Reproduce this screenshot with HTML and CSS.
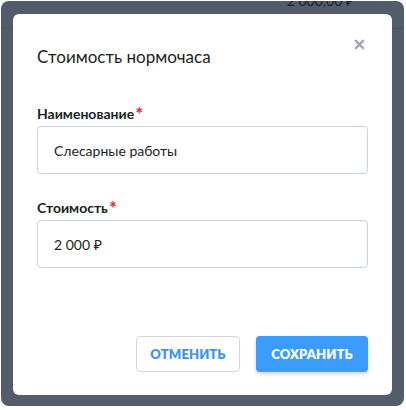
FILE: index.html
```html
<!DOCTYPE html>
<html lang="ru">
<head>
<meta charset="utf-8">
<title>Стоимость нормочаса</title>
<link rel="stylesheet" href="styles.css">
</head>
<body>
<div class="screen">
  <div class="bg-row"><span class="bg-sum">2 000,00 ₽</span></div>
  <div class="modal">
    <div class="modal-head">
      <h2 class="modal-title">Стоимость нормочаса</h2>
      <button class="close" aria-label="Закрыть">
        <svg width="11" height="11" viewBox="0 0 11 11"><path d="M1.2 1.2 L9.8 9.8 M9.8 1.2 L1.2 9.8" stroke="#a3a9b3" stroke-width="2.4" stroke-linecap="butt"/></svg>
      </button>
    </div>
    <div class="field field-first">
      <label class="label">Наименование<span class="req">*</span></label>
      <div class="input">Слесарные работы</div>
    </div>
    <div class="field field-next">
      <label class="label">Стоимость<span class="req">*</span></label>
      <div class="input">2 000 ₽</div>
    </div>
    <div class="actions">
      <button class="btn btn-outline">ОТМЕНИТЬ</button>
      <button class="btn btn-primary">СОХРАНИТЬ</button>
    </div>
  </div>
</div>
</body>
</html>
```

FILE: styles.css
```css
html, body {
  margin: 0;
  padding: 0;
  background: #ffffff;
}
body {
  font-family: Lato, "Noto Sans", "Liberation Sans", sans-serif;
  width: 406px;
  height: 410px;
  overflow: hidden;
}
.screen {
  position: relative;
  margin: 1px 2px 0 1px;
  height: 405px;
  background: #525c6b;
  border-radius: 8px;
  overflow: hidden;
}
.bg-row {
  height: 27px;
  border-bottom: 1px solid #4a5360;
  display: flex;
  justify-content: flex-end;
  align-items: flex-start;
  padding-right: 50px;
}
.bg-sum {
  font-size: 14px;
  color: #1b1f26;
  line-height: 14px;
  margin-top: -7px;
}
.modal {
  position: absolute;
  left: 12px;
  top: 13px;
  width: 379px;
  height: 381px;
  box-sizing: border-box;
  background: #ffffff;
  border-radius: 6px;
  padding: 0 24px;
  display: flex;
  flex-direction: column;
}
.modal-head {
  display: flex;
  justify-content: space-between;
  align-items: flex-start;
  padding-top: 31px;
}
.modal-title {
  margin: 0;
  font-size: 17px;
  font-weight: 400;
  line-height: 24px;
  color: #1b1e23;
}
.close {
  border: 0;
  background: none;
  padding: 0;
  margin: -6px 3px 0 0;
  width: 11px;
  height: 11px;
  display: block;
}
.close svg { display: block; }
.field {
  display: flex;
  flex-direction: column;
}
.field-first { margin-top: 36px; }
.field-next { margin-top: 25px; }
.label {
  font-size: 14px;
  font-weight: 700;
  color: #1b1e23;
  line-height: 18px;
  margin-bottom: 3px;
}
.req {
  color: #f5222d;
  font-size: 19px;
  font-weight: 700;
  position: relative;
  top: 2px;
  margin-left: 1px;
  line-height: 0;
}
.input {
  height: 48px;
  box-sizing: border-box;
  border: 1px solid #c3d3e8;
  border-radius: 4px;
  padding: 0 16px;
  display: flex;
  align-items: center;
  font-size: 14px;
  color: #1b1e23;
}
.actions {
  margin-top: auto;
  margin-bottom: 23px;
  display: flex;
  justify-content: flex-end;
  gap: 16px;
}
.btn {
  height: 36px;
  border-radius: 4px;
  font-family: Lato, "Noto Sans", sans-serif;
  font-size: 13px;
  font-weight: 800;
  letter-spacing: 0.1px;
  box-sizing: border-box;
}
.btn-outline {
  width: 104px;
  background: #fff;
  border: 1px solid #d3d8df;
  color: #3c94f2;
}
.btn-primary {
  width: 112px;
  background: #3b9cfc;
  border: 0;
  color: #ffffff;
  box-shadow: 0 2px 4px rgba(40, 90, 150, 0.25);
}
```
